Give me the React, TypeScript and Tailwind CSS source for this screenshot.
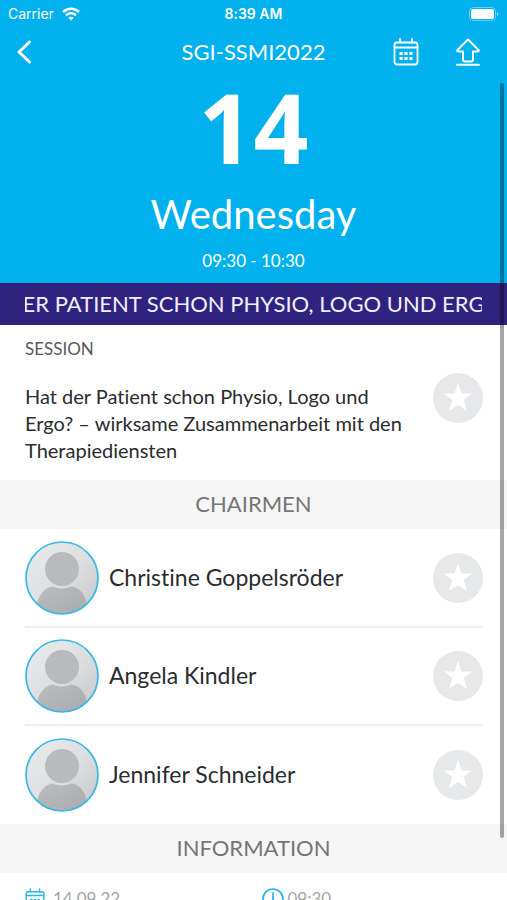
import { ReactNode } from "react";

const chairmen = ["Christine Goppelsröder", "Angela Kindler", "Jennifer Schneider"];

function CalendarIcon({ className }: { className: string }) {
  return (
    <svg viewBox="0 0 26 28" fill="none" stroke="currentColor" strokeWidth="1.8" strokeLinecap="round" className={className}>
      <rect x="1.5" y="4.5" width="23" height="22" rx="2.5" />
      <path d="M1.5 9.500h23M7 1v3.500M19 1v3.500" />
      <path
        d="M6.500 15.500h3.200M11.400 15.500h3.200M16.300 15.500h3.200M6.500 20.500h3.200M11.400 20.500h3.200M16.300 20.500h3.200"
        strokeWidth="3.200"
        strokeLinecap="butt"
      />
    </svg>
  );
}

function FavouriteButton({ label }: { label: string }) {
  return (
    <button aria-label={label} className="size-[50px] shrink-0 rounded-full bg-[#e6e8e9] flex items-center justify-center">
      <svg viewBox="0 0 28 28" className="size-7 fill-white">
        <path d="M14 -1l3.600 10.500H28l-8.300 6.500 3.300 11L14 21 5 27l3.300-11L0 9.500h10.400z" />
      </svg>
    </button>
  );
}

function Avatar({ id }: { id: string }) {
  return (
    <svg viewBox="0 0 74 74" className="size-[74px] shrink-0">
      <defs>
        <linearGradient id={`${id}-bg`} x1="0" y1="0" x2="1" y2="1">
          <stop offset="0" stopColor="#ebeced" />
          <stop offset="0.5" stopColor="#dddfe0" />
          <stop offset="1" stopColor="#c4c6c8" />
        </linearGradient>
        <linearGradient id={`${id}-body`} x1="0" y1="0" x2="1" y2="1">
          <stop offset="0" stopColor="#bbbcbd" />
          <stop offset="1" stopColor="#a9abac" />
        </linearGradient>
        <clipPath id={`${id}-clip`}>
          <circle cx="37" cy="37" r="36" />
        </clipPath>
      </defs>
      <circle cx="37" cy="37" r="36" fill={`url(#${id}-bg)`} />
      <g clipPath={`url(#${id}-clip)`}>
        <circle cx="37" cy="28" r="17" fill="#b9babb" />
        <path d="M12 63C14 53 21 46 28 45.500c6 2.700 12 2.700 18 0C54 46 60 53 62 63v11H12z" fill={`url(#${id}-body)`} />
      </g>
      <circle cx="37" cy="37" r="36" fill="none" stroke="#37b8e6" strokeWidth="1.700" />
    </svg>
  );
}

function SectionTitle({ children }: { children: ReactNode }) {
  return <h2 className="h-[49px] pb-0.5 bg-[#f6f6f6] flex items-center justify-center text-[22px] text-[#757677]">{children}</h2>;
}

export default function App() {
  return (
    <div className="relative h-screen overflow-hidden bg-white font-['Lato',sans-serif] [font-variant-ligatures:none] text-[#2b2c30]">
      <header className="bg-[#00b1ed] text-white">
        <div className="h-7 grid grid-cols-3 items-center px-2 font-['Inter',sans-serif] text-sm">
          <div className="flex items-center gap-2">
            <span>Carrier</span>
            <svg viewBox="0 0 18 14" className="w-[18px] h-3.5 fill-none stroke-white" strokeWidth="2.500">
              <path d="M1 5c4.500-4.400 11.500-4.400 16 0M4 8.300c3-2.700 7-2.700 10 0" />
              <path d="M9 13.500L6.300 10.800c1.500-1.400 3.900-1.400 5.400 0z" fill="white" stroke="none" />
            </svg>
          </div>
          <span className="text-center font-semibold whitespace-nowrap">8:39 AM</span>
          <svg viewBox="0 0 30 14" className="w-[30px] h-3.5 justify-self-end">
            <rect x="0.500" y="0.500" width="26" height="13" rx="4" fill="none" stroke="white" strokeOpacity="0.4" />
            <rect x="2" y="2" width="23" height="10" rx="2.500" fill="white" />
            <path d="M28 5v4c2-.8 2-3.200 0-4z" fill="white" fillOpacity="0.5" />
          </svg>
        </div>

        <div className="h-12 grid grid-cols-3 items-center px-4">
          <button aria-label="Back" className="justify-self-start">
            <svg viewBox="0 0 16 24" className="w-4 h-6 fill-none stroke-white" strokeWidth="3" strokeLinecap="round" strokeLinejoin="round">
              <path d="M13.500 2L3 12l10.500 10" />
            </svg>
          </button>
          <h1 className="text-center text-[22px] leading-7 whitespace-nowrap">SGI-SSMI2022</h1>
          <div className="flex items-center justify-end gap-9 pr-2.5">
            <button aria-label="Add to calendar">
              <CalendarIcon className="w-[26px] h-7" />
            </button>
            <button aria-label="Share">
              <svg viewBox="0 0 26 28" className="w-[26px] h-7 fill-none stroke-white" strokeWidth="2" strokeLinecap="round" strokeLinejoin="round">
                <path d="M13 1.500L2.500 12q-.8 1.500 1 1.500H8v8q0 2 2 2h6q2 0 2-2v-8h4.500q1.800 0 1-1.500z" />
                <path d="M2 26.800h22" />
              </svg>
            </button>
          </div>
        </div>

        <div className="flex flex-col items-center pb-3">
          <p className="font-['Open_Sans',sans-serif] text-[96px] leading-[102px] font-bold">14</p>
          <p className="text-[40px] leading-[73px]">Wednesday</p>
          <p className="text-[17px] leading-5">09:30 - 10:30</p>
        </div>
      </header>

      <div className="h-[42px] bg-[#30237f] px-[25px]">
        <div className="h-full pb-0.5 overflow-hidden flex items-center justify-center whitespace-nowrap text-[22px] text-[#f1efff]">
          <span>ER PATIENT SCHON PHYSIO, LOGO UND ERG</span>
        </div>
      </div>

      <section className="pl-[25px] pr-6 pt-3 pb-4">
        <p className="text-[17px] leading-6 text-[#58595b]">SESSION</p>
        <div className="flex items-start justify-between pt-3">
          <p className="max-w-[395px] pt-2.5 text-xl leading-[27px]">
            Hat der Patient schon Physio, Logo und Ergo? – wirksame Zusammenarbeit mit den Therapiediensten
          </p>
          <FavouriteButton label="Add session to favourites" />
        </div>
      </section>

      <SectionTitle>CHAIRMEN</SectionTitle>
      <ul className="pl-[25px] pr-6 pt-px divide-y-2 divide-[#efeff0]">
        {chairmen.map((name, i) => (
          <li key={name} className="h-[98px] flex items-center gap-2.5">
            <Avatar id={`avatar${i}`} />
            <span className="grow pb-0.5 text-[23px]">{name}</span>
            <FavouriteButton label={`Add ${name} to favourites`} />
          </li>
        ))}
      </ul>

      <SectionTitle>INFORMATION</SectionTitle>
      <div className="grid grid-cols-2 px-[25px] pt-3.5 text-[17px] leading-6 text-[#a3a4a6]">
        <div className="flex items-center gap-2">
          <CalendarIcon className="w-5 h-[22px] text-[#27b4e8]" />
          <span>14.09.22</span>
        </div>
        <div className="flex items-center gap-1 pl-2">
          <svg viewBox="0 0 22 22" className="size-[22px] fill-none stroke-[#27b4e8]" strokeWidth="1.700" strokeLinecap="round">
            <circle cx="11" cy="11" r="10" />
            <path d="M11 5v6.500l3 3" />
          </svg>
          <span>09:30</span>
        </div>
      </div>

      <div className="absolute right-[3px] top-[83px] h-[755px] w-1 rounded-full bg-black/35" />
    </div>
  );
}
